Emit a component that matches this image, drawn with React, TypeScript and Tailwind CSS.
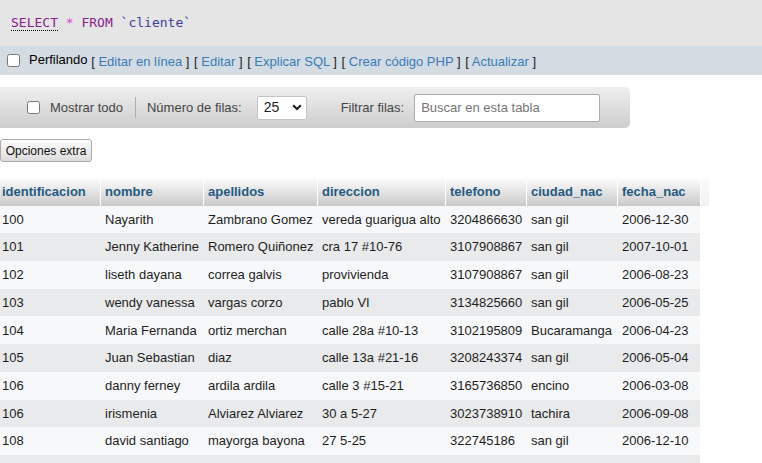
import React from "react";

const rows = [
  ["100", "Nayarith", "Zambrano Gomez", "vereda guarigua alto", "3204866630", "san gil", "2006-12-30"],
  ["101", "Jenny Katherine", "Romero Quiñonez", "cra 17 #10-76", "3107908867", "san gil", "2007-10-01"],
  ["102", "liseth dayana", "correa galvis", "provivienda", "3107908867", "san gil", "2006-08-23"],
  ["103", "wendy vanessa", "vargas corzo", "pablo VI", "3134825660", "san gil", "2006-05-25"],
  ["104", "Maria Fernanda", "ortiz merchan", "calle 28a #10-13", "3102195809", "Bucaramanga", "2006-04-23"],
  ["105", "Juan Sebastian", "diaz", "calle 13a #21-16", "3208243374", "san gil", "2006-05-04"],
  ["106", "danny ferney", "ardila ardila", "calle 3 #15-21", "3165736850", "encino", "2006-03-08"],
  ["106", "irismenia", "Alviarez Alviarez", "30 a 5-27", "3023738910", "tachira", "2006-09-08"],
  ["108", "david santiago", "mayorga bayona", "27 5-25", "322745186", "san gil", "2006-12-10"],
  ["", "", "", "", "", "", ""],
];

const headers = ["identificacion", "nombre", "apellidos", "direccion", "telefono", "ciudad_nac", "fecha_nac"];
const widths = ["w-[100px]", "w-[103px]", "w-[114px]", "w-[128px]", "w-[81px]", "w-[91px]", "w-[83px]"];

function Link({ children }: { children: React.ReactNode }) {
  return <span className="text-[#3a7bb5]">{children}</span>;
}

function Sep() {
  return (
    <>
      {" ]"}
      <span className="inline-block w-[1px]" />
      {" [ "}
    </>
  );
}

export default function App() {
  return (
    <div className="w-[762px] h-[463px] overflow-hidden bg-white font-['Liberation_Sans',Arial,sans-serif] text-[13px] text-[#1e1e1e]">
      {/* SQL query */}
      <div className="h-[46px] bg-[#e5e5e5] flex items-center pl-[11px] font-['DejaVu_Sans_Mono',monospace] text-[13px]">
        <span className="text-[#8a208a] border-b border-dotted border-black leading-[15px]">SELECT</span>
        <span className="whitespace-pre"> </span>
        <span className="text-[#e040e0]">*</span>
        <span className="whitespace-pre"> </span>
        <span className="text-[#8a208a]">FROM</span>
        <span className="whitespace-pre"> </span>
        <span className="text-[#3c3c9c]">`cliente`</span>
      </div>

      {/* Perfilando bar */}
      <div className="h-[29px] bg-[#d3dce3] flex items-center pl-[7px]">
        <input type="checkbox" className="m-0 w-[13px] h-[13px]" />
        <span className="ml-[9px] mb-[2px] text-black">Perfilando</span>
        <span className="whitespace-pre text-[#222] mt-[2px]">
          {" [ "}<Link>Editar en línea</Link><Sep /><Link>Editar</Link><Sep /><Link>Explicar SQL</Link><Sep /><Link>Crear código PHP</Link><Sep /><Link>Actualizar</Link>{" ]"}
        </span>
      </div>

      {/* Navigation bar */}
      <div className="mt-[12px] h-[41px] w-[630px] rounded-r-[5px] bg-[linear-gradient(to_bottom,#efefef,#cdcdcd)] flex items-center pl-[27px] text-[#444]">
        <input type="checkbox" className="m-0 w-[13px] h-[13px]" />
        <span className="ml-[10px]">Mostrar todo</span>
        <span className="ml-[12px] w-px h-[21px] bg-[#b9ada0]" />
        <span className="ml-[11px]">Número de filas:</span>
        <div className="ml-[15px] w-[50px] h-[24px] bg-white border border-[#c4c4c4] rounded-[2px] flex items-center pl-[6px] text-[#222] text-[14px]">
          <span>25</span>
          <svg className="ml-[13px]" width="10" height="7" viewBox="0 0 10 7">
            <path d="M1.2 1.3 L5 5 L8.8 1.3" fill="none" stroke="#222" strokeWidth="2.2" />
          </svg>
        </div>
        <span className="ml-[34px]">Filtrar filas:</span>
        <div className="ml-[10px] w-[186px] h-[28px] bg-white border border-[#aaa] rounded-[2px] flex items-center pl-[6px] text-[#767676]">
          Buscar en esta tabla
        </div>
      </div>

      {/* Opciones extra */}
      <div className="mt-[11px] w-[92px] h-[23px] border border-[#aaa] rounded-[3px] bg-[linear-gradient(to_bottom,#fdfdfd,#dcdcdc)] flex items-center justify-center text-[12px] text-[#111]">
        Opciones extra
      </div>

      {/* Table */}
      <div className="mt-[16px]">
        <div className="flex h-[27.7px] font-bold text-[#235a81]">
          {headers.map((h, i) => (
            <div
              key={h}
              className={`${widths[i]} h-full flex items-center bg-[linear-gradient(to_bottom,#fdfdfd,#c9c9c9)] ${i === 0 ? "pl-[2px]" : "pl-[4px] border-l border-white"}`}
            >
              {h}
            </div>
          ))}
          <div className="w-[9px] h-full border-l border-white bg-[linear-gradient(to_bottom,#fbfbfb,#f1f1f1)]" />
        </div>
        {rows.map((r, ri) => (
          <div key={ri} className={`flex h-[27.7px] w-[700px] ${ri % 2 === 0 ? "bg-[#f7f8f9]" : "bg-[#e9eaeb]"}`}>
            {r.map((c, ci) => (
              <div
                key={ci}
                className={`${widths[ci]} h-full flex items-center whitespace-nowrap ${ci === 0 ? "pl-[2px]" : "pl-[5px]"}`}
              >
                {c}
              </div>
            ))}
          </div>
        ))}
      </div>
    </div>
  );
}
